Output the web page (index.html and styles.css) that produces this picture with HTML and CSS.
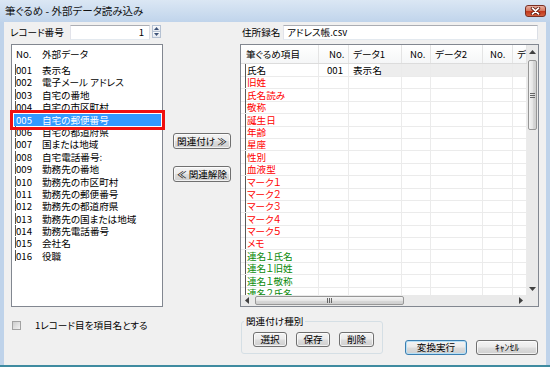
FILE: index.html
```
<!DOCTYPE html>
<html lang="ja">
<head>
<meta charset="utf-8">
<title>筆ぐるめ - 外部データ読み込み</title>
<link rel="stylesheet" href="styles.css">
</head>
<body>
<div class="window">
  <div class="titlebar">
    <span class="title">筆ぐるめ - 外部データ読み込み</span>
    <span class="close"><svg width="11" height="8" viewBox="0 0 11 8"><path d="M2.5 1.2 L8.5 6.8 M8.5 1.2 L2.5 6.8" stroke="#5a1408" stroke-width="3.4" stroke-linecap="round"/><path d="M2.5 1.2 L8.5 6.8 M8.5 1.2 L2.5 6.8" stroke="#fff" stroke-width="1.8" stroke-linecap="round"/></svg></span>
  </div>
  <div class="frame">
    <div class="client">
      <div class="main">
        <div class="col-left">
          <div class="field-row">
            <span class="lbl rec-lbl">レコード番号</span>
            <span class="textbox rec-input">1</span>
            <span class="spin">
              <span class="spin-btn"><svg width="5" height="3" viewBox="0 0 5 3"><path d="M0 3L2.5 0L5 3Z" fill="#3d5277"/></svg></span>
              <span class="spin-btn"><svg width="5" height="3" viewBox="0 0 5 3"><path d="M0 0L2.5 3L5 0Z" fill="#3d5277"/></svg></span>
            </span>
          </div>
          <div class="list">
            <div class="lhead"><span class="lnum">No.</span><span>外部データ</span></div>
            <div class="lrow"><span class="lnum">001</span><span>表示名</span></div>
            <div class="lrow"><span class="lnum">002</span><span>電子メール アドレス</span></div>
            <div class="lrow"><span class="lnum">003</span><span>自宅の番地</span></div>
            <div class="lrow"><span class="lnum">004</span><span>自宅の市区町村</span></div>
            <div class="lrow sel"><span class="lnum">005</span><span>自宅の郵便番号</span></div>
            <div class="lrow"><span class="lnum">006</span><span>自宅の都道府県</span></div>
            <div class="lrow"><span class="lnum">007</span><span>国または地域</span></div>
            <div class="lrow"><span class="lnum">008</span><span>自宅電話番号:</span></div>
            <div class="lrow"><span class="lnum">009</span><span>勤務先の番地</span></div>
            <div class="lrow"><span class="lnum">010</span><span>勤務先の市区町村</span></div>
            <div class="lrow"><span class="lnum">011</span><span>勤務先の郵便番号</span></div>
            <div class="lrow"><span class="lnum">012</span><span>勤務先の都道府県</span></div>
            <div class="lrow"><span class="lnum">013</span><span>勤務先の国または地域</span></div>
            <div class="lrow"><span class="lnum">014</span><span>勤務先電話番号</span></div>
            <div class="lrow"><span class="lnum">015</span><span>会社名</span></div>
            <div class="lrow"><span class="lnum">016</span><span>役職</span></div>
          </div>
        </div>
        <div class="col-mid">
          <button class="btn mid-btn">関連付け ≫</button>
          <button class="btn mid-btn mid-btn2">≪ 関連解除</button>
        </div>
        <div class="col-right">
          <div class="field-row">
            <span class="lbl addr-lbl">住所録名</span>
            <span class="textbox addr-input">アドレス帳.csv</span>
          </div>
          <div class="grid">
            <div class="cells">
              <div class="ghead">
                <span>筆ぐるめ項目</span><span class="c-no">No.</span><span>データ1</span><span class="c-no c-no2">No.</span><span>データ2</span><span class="c-no c-no3">No.</span><span>デ</span>
              </div>
              <div class="grow cur"><span>氏名</span><span class="c-no">001</span><span>表示名</span><span></span><span></span><span></span><span></span></div>
              <div class="grow red"><span>旧姓</span><span></span><span></span><span></span><span></span><span></span><span></span></div>
              <div class="grow red"><span>氏名読み</span><span></span><span></span><span></span><span></span><span></span><span></span></div>
              <div class="grow red"><span>敬称</span><span></span><span></span><span></span><span></span><span></span><span></span></div>
              <div class="grow red"><span>誕生日</span><span></span><span></span><span></span><span></span><span></span><span></span></div>
              <div class="grow red"><span>年齢</span><span></span><span></span><span></span><span></span><span></span><span></span></div>
              <div class="grow red"><span>星座</span><span></span><span></span><span></span><span></span><span></span><span></span></div>
              <div class="grow red"><span>性別</span><span></span><span></span><span></span><span></span><span></span><span></span></div>
              <div class="grow red"><span>血液型</span><span></span><span></span><span></span><span></span><span></span><span></span></div>
              <div class="grow red"><span>マーク１</span><span></span><span></span><span></span><span></span><span></span><span></span></div>
              <div class="grow red"><span>マーク２</span><span></span><span></span><span></span><span></span><span></span><span></span></div>
              <div class="grow red"><span>マーク３</span><span></span><span></span><span></span><span></span><span></span><span></span></div>
              <div class="grow red"><span>マーク４</span><span></span><span></span><span></span><span></span><span></span><span></span></div>
              <div class="grow red"><span>マーク５</span><span></span><span></span><span></span><span></span><span></span><span></span></div>
              <div class="grow red"><span>メモ</span><span></span><span></span><span></span><span></span><span></span><span></span></div>
              <div class="grow green"><span>連名１氏名</span><span></span><span></span><span></span><span></span><span></span><span></span></div>
              <div class="grow green"><span>連名１旧姓</span><span></span><span></span><span></span><span></span><span></span><span></span></div>
              <div class="grow green"><span>連名１敬称</span><span></span><span></span><span></span><span></span><span></span><span></span></div>
              <div class="grow green"><span>連名２氏名</span><span></span><span></span><span></span><span></span><span></span><span></span></div>
            </div>
            <div class="vscroll">
              <span class="sb-btn"><svg width="7" height="4" viewBox="0 0 7 4"><path d="M0 4L3.5 0L7 4Z" fill="#404040"/></svg></span>
              <span class="vthumb"><svg width="5" height="5" viewBox="0 0 5 5"><path d="M0 0.5H5M0 2.5H5M0 4.5H5" stroke="#666" stroke-width="1"/></svg></span>
              <span class="sb-space"></span>
              <span class="sb-btn"><svg width="7" height="4" viewBox="0 0 7 4"><path d="M0 0L3.5 4L7 0Z" fill="#404040"/></svg></span>
            </div>
            <div class="hscroll">
              <span class="sb-btn h"><svg width="4" height="7" viewBox="0 0 4 7"><path d="M4 0L0 3.5L4 7Z" fill="#404040"/></svg></span>
              <span class="hthumb"><svg width="5" height="5" viewBox="0 0 5 5"><path d="M0.5 0V5M2.5 0V5M4.5 0V5" stroke="#666" stroke-width="1"/></svg></span>
              <span class="sb-space"></span>
              <span class="sb-btn h"><svg width="4" height="7" viewBox="0 0 4 7"><path d="M0 0L4 3.5L0 7Z" fill="#404040"/></svg></span>
            </div>
            <div class="corner"></div>
          </div>
        </div>
      </div>
      <div class="bottom">
        <div class="chk-wrap">
          <span class="chk"></span>
          <span class="chk-label">1レコード目を項目名とする</span>
        </div>
        <div class="group">
          <span class="legend">関連付け種別</span>
          <div class="group-btns">
            <button class="btn g-btn">選択</button>
            <button class="btn g-btn">保存</button>
            <button class="btn g-btn g-btn3">削除</button>
          </div>
        </div>
        <div class="actions">
          <button class="btn act-btn default">変換実行</button>
          <button class="btn act-btn">ｷｬﾝｾﾙ</button>
        </div>
      </div>
    </div>
  </div>
</div>
</body>
</html>
```

FILE: styles.css
```
* { box-sizing: border-box; }
html, body { margin: 0; padding: 0; }
body {
  width: 550px; height: 367px; overflow: hidden; background: #fff;
  font-family: "Noto Sans CJK JP", "Noto Sans", sans-serif;
  font-size: 9.6px; color: #000;
  font-feature-settings: "palt";
}
svg { display: block; }

.window { width: 550px; height: 367px; display: flex; flex-direction: column; background: #bfd3ea; }
.titlebar {
  height: 22px; flex: none; display: flex; align-items: center; padding-left: 5px;
  background: linear-gradient(#dbe7f4, #c0d4eb);
}
.title { font-size: 10.5px; line-height: 12px; color: #111; }
.close {
  margin-left: auto; margin-right: 4px; width: 21px; height: 12px;
  border: 1px solid #7a3024; border-radius: 3px;
  background: linear-gradient(#eab1a2, #d67a62 45%, #c2391d 55%, #d3603f);
  display: flex; align-items: center; justify-content: center;
}

.frame { flex: 1; display: flex; padding: 0 4px; border-bottom: 2px solid #3f8ba0; }
.client { flex: 1; background: #f0f0f0; padding: 3px 7px 0; display: flex; flex-direction: column; }
.main { display: flex; align-items: flex-start; }

.col-left { width: 152px; flex: none; }
.field-row { height: 15px; display: flex; align-items: flex-start; margin-bottom: 4px; }
.lbl { line-height: 15px; white-space: nowrap; }
.rec-lbl { width: 60px; margin-left: -1px; flex: none; }
.textbox {
  height: 15px; background: #fff; border: 1px solid;
  border-color: #abadb3 #dbdfe6 #e3e9ef #e2e3ea; line-height: 13px; white-space: nowrap;
}
.rec-input { width: 80px; text-align: right; padding-right: 5px; flex: none; }
.spin { width: 9px; height: 13px; margin-left: 2px; display: flex; flex-direction: column; flex: none; }
.spin-btn {
  flex: 1; display: flex; align-items: center; justify-content: center;
  border: 1px solid #b5c1d2; background: linear-gradient(#fafbfc, #e3e8ef);
}
.spin-btn + .spin-btn { border-top: none; }

.list { height: 263px; border: 1px solid #828790; background: #fff; }
.lhead { height: 19px; display: flex; line-height: 19px; padding-left: 4px; }
.lnum { width: 26px; flex: none; }
.lrow {
  height: 12.4px; line-height: 12.4px; display: flex; margin-left: 3px; padding-left: 1px;
  background: linear-gradient(to right, #555 1px, transparent 1px) no-repeat;
  background-size: 1px 11.4px; white-space: nowrap;
}
.lrow.sel {
  margin-left: 2px; margin-right: 1px; padding-left: 2px;
  background: #3399ff; color: #fff;
  outline: 3px solid #f01010; outline-offset: 1px;
}

.col-mid { width: 58px; flex: none; margin-left: 10px; padding-top: 108px; display: flex; flex-direction: column; }
.btn {
  font-family: inherit; font-size: 9.6px; font-feature-settings: "palt"; color: #000;
  padding: 0; margin: 0; line-height: 13px; white-space: nowrap;
  border: 1px solid #707070; border-radius: 3px;
  background: linear-gradient(#f3f3f3, #ebebeb 48%, #dddddd 52%, #cfcfcf);
  box-shadow: inset 0 0 0 1px rgba(255,255,255,0.7);
}
.mid-btn { height: 16px; width: 58px; }
.mid-btn2 { margin-top: 17px; }

.col-right { width: 299px; flex: none; margin-left: 9px; }
.addr-lbl { width: 43px; padding-left: 2px; flex: none; }
.addr-input { width: 255px; padding-left: 3px; flex: none; }

.grid {
  width: 299px; height: 263px; border: 1px solid #828790; background: #fff;
  display: grid; grid-template-columns: 286px 11px; grid-template-rows: 250px 11px;
}
.cells { overflow: hidden; }
.ghead, .grow { display: grid; grid-template-columns: 78px 30px 53px 29px 52px 30px 14px; }
.ghead { height: 19px; background: linear-gradient(#fff, #f5f6f7); border-bottom: 1px solid #dcdcdc; }
.ghead span { border-right: 1px solid #e4e4e4; line-height: 18px; padding-left: 4px; white-space: nowrap; overflow: hidden; }
.ghead span:first-child { padding-left: 5px; }
.ghead .c-no { padding-left: 10px; }
.ghead .c-no2 { padding-left: 8px; }
.ghead .c-no3 { padding-left: 7px; }
.grow { height: 12.4px; }
.grow > span {
  border-right: 1px solid #ebebeb; border-bottom: 1px solid #ebebeb;
  line-height: 12px; padding-left: 4px; white-space: nowrap;
}
.grow > span:first-child {
  padding-left: 6px;
  background: linear-gradient(to right, transparent 4px, #5a5a5a 4px, #5a5a5a 5px, transparent 5px);
}
.grow > .c-no { padding-left: 8px; }
.grow.cur { background: linear-gradient(to right, #fff 139px, #ededed 139px); }
.grow.red { color: #f00; }
.grow.green { color: #0a8a0a; }

.vscroll { background: #eaeaea; display: flex; flex-direction: column; }
.hscroll { background: #eaeaea; display: flex; }
.corner { background: #eaeaea; }
.sb-btn { height: 13px; flex: none; display: flex; align-items: center; justify-content: center; }
.sb-btn.h { height: auto; width: 12px; }
.sb-space { flex: 1; }
.vthumb {
  margin: 2px 1px 0; height: 70px; flex: none;
  border: 1px solid #979797; border-radius: 2px;
  background: linear-gradient(to right, #f4f4f4, #e6e6e6 50%, #d9d9d9 51%, #cfcfcf);
  display: flex; align-items: center; justify-content: center;
}
.hthumb {
  margin: 1px 0 1px 2px; width: 149px; flex: none;
  border: 1px solid #979797; border-radius: 2px;
  background: linear-gradient(#f4f4f4, #e6e6e6 50%, #d9d9d9 51%, #cfcfcf);
  display: flex; align-items: center; justify-content: center;
}

.bottom { display: flex; align-items: flex-start; }
.chk-wrap { width: 230px; flex: none; padding-top: 12px; display: flex; align-items: center; }
.chk {
  width: 9px; height: 9px; margin-left: 1px; flex: none;
  border: 1px solid #a2a2a2; background: linear-gradient(135deg, #cdcdcd, #f2f2f2);
}
.chk-label { margin-left: 14px; line-height: 12px; white-space: nowrap; }

.group {
  width: 142px; height: 33px; margin-top: 14px; flex: none;
  border: 1px solid #d5dfe5; border-radius: 3px;
  display: flex; flex-direction: column; align-items: flex-start;
}
.legend { margin: -7px 0 0 2px; padding: 0 2px; background: #f0f0f0; line-height: 12px; white-space: nowrap; }
.group-btns { display: flex; gap: 9px; margin: 5px 0 0 11px; }
.g-btn { width: 34px; height: 15px; }
.g-btn3 { width: 35px; }

.actions { display: flex; gap: 9px; margin: 33px 0 0 22px; }
.act-btn { width: 62px; height: 15px; }
.act-btn.default { border-color: #3c7fb1; box-shadow: inset 0 0 0 1px #b6e0f7; }
```
